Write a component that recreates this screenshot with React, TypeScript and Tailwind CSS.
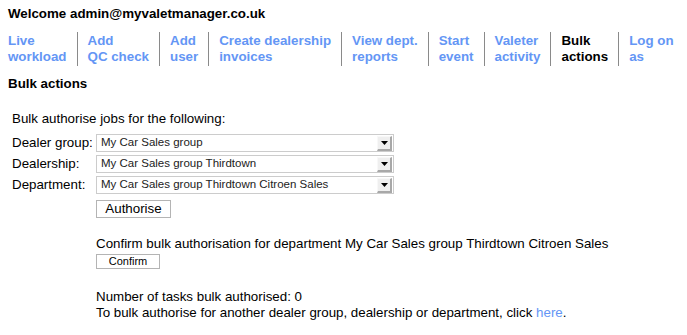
import { useState } from 'react';

const navLinks = [
    { label: ['Live', 'workload'] },
    { label: ['Add', 'QC check'] },
    { label: ['Add', 'user'] },
    { label: ['Create dealership', 'invoices'] },
    { label: ['View dept.', 'reports'] },
    { label: ['Start', 'event'] },
    { label: ['Valeter', 'activity'] },
    { label: ['Bulk', 'actions'], active: true },
    { label: ['Log on', 'as'] },
];

const FakeSelect = ({ value }: { value: string }) => (
    <div className="flex items-center h-[18px] w-[298px] border border-[#cccccc] bg-white pl-[4px] pr-[1px]">
        <span className="flex-1 text-[11.5px] text-[#222] leading-none truncate">{value}</span>
        <span className="flex items-center justify-center w-[15px] h-[15px] bg-[#efefef] border-t border-l border-t-[#f8f8f8] border-l-[#f8f8f8] border-r-2 border-b-2 border-r-[#a8a8a8] border-b-[#a8a8a8]">
            <svg width="7" height="4" viewBox="0 0 7 4">
                <path d="M0 0 L7 0 L3.5 4 Z" fill="#000" />
            </svg>
        </span>
    </div>
);

const App = () => {
    const [dealerGroup] = useState('My Car Sales group');
    const [dealership] = useState('My Car Sales group Thirdtown');
    const [department] = useState('My Car Sales group Thirdtown Citroen Sales');

    return (
        <div className="px-2 pt-[6px] text-[13.33px] leading-4 text-black bg-white min-h-screen" style={{ fontFamily: '"Liberation Sans", Arial, sans-serif' }}>
            <div className="font-bold">Welcome admin@myvaletmanager.co.uk</div>

            {/* Nav */}
            <div className="flex mt-[10px] font-bold whitespace-nowrap">
                {navLinks.map((link, i) => (
                    <div
                        key={i}
                        className={`flex flex-col shrink-0 py-[1px] ${i === 0 ? 'pr-[10px]' : 'px-[10px] border-l border-[#8a8a8a]'} ${link.active ? 'text-black' : 'text-[#6496f5]'}`}
                    >
                        <span>{link.label[0]}</span>
                        <span>{link.label[1]}</span>
                    </div>
                ))}
            </div>

            <div className="font-bold mt-[10px]">Bulk actions</div>

            <div className="pl-[4px] mt-[19px]">
                <div>Bulk authorise jobs for the following:</div>
                <div className="flex flex-col gap-[3px] mt-[7px]">
                    <div className="flex items-center">
                        <span className="w-[84px]">Dealer group:</span>
                        <FakeSelect value={dealerGroup} />
                    </div>
                    <div className="flex items-center">
                        <span className="w-[84px]">Dealership:</span>
                        <FakeSelect value={dealership} />
                    </div>
                    <div className="flex items-center">
                        <span className="w-[84px]">Department:</span>
                        <FakeSelect value={department} />
                    </div>
                </div>
                <div className="pl-[84px] mt-[6px]">
                    <button type="button" className="h-[18px] w-[75px] border border-[#b4b4b4] bg-white text-[13.33px] leading-none">
                        Authorise
                    </button>
                </div>

                <div className="pl-[84px] mt-[18px]">
                    <div>Confirm bulk authorisation for department My Car Sales group Thirdtown Citroen Sales</div>
                    <button type="button" className="mt-[2px] h-[15px] w-[64px] border border-[#b4b4b4] bg-white text-[11px] leading-none">
                        Confirm
                    </button>
                    <div className="mt-[20px]">Number of tasks bulk authorised: 0</div>
                    <div>
                        To bulk authorise for another dealer group, dealership or department, click{' '}
                        <a href="#" className="text-[#6496f5]">here</a>.
                    </div>
                </div>
            </div>
        </div>
    );
};

export default App;
